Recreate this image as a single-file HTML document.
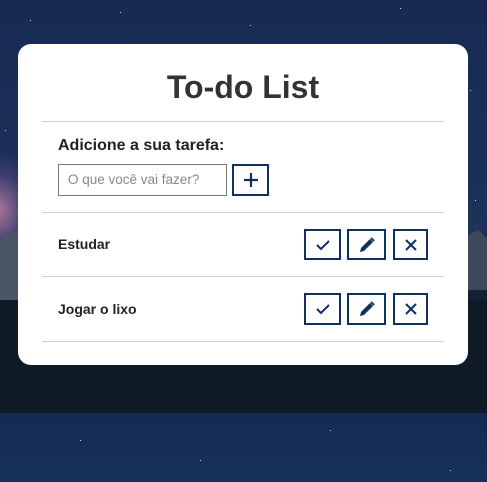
<!DOCTYPE html>
<html><head><style>
html,body{margin:0;padding:0;width:487px;height:482px;overflow:hidden;font-family:"Liberation Sans",sans-serif}
.bg{position:absolute;left:0;top:0;width:487px;height:482px;background:#13264a}
.sky{position:absolute;left:0;top:0;width:487px;height:413px;background:
radial-gradient(ellipse 40px 60px at 0 210px,rgba(200,130,170,.8),rgba(120,90,150,.35) 60%,transparent),
linear-gradient(#182a52 0,#1a2f58 40%,#1d3358 55%,#14243b 68%,#0d1a2a 80%,#0b1622 100%)}
.mtn{position:absolute;left:0;top:230px;width:487px;height:183px}
.low{position:absolute;left:0;top:413px;width:487px;height:69px;background:linear-gradient(#142a55,#16305c)}
.star{position:absolute;width:1px;height:1px;background:#cfd8ee}
.card{position:absolute;left:18px;top:44px;width:450px;height:321px;background:#fff;border-radius:13px}
h1{position:absolute;left:0;width:450px;top:67px;margin:0;text-align:center;font-size:32px;font-weight:bold;color:#333;line-height:40px}
.hr{position:absolute;left:42px;width:402px;height:1px;background:#d2d2d2}
.lab{position:absolute;left:58px;top:137px;font-size:16px;font-weight:bold;color:#222}
.inp{position:absolute;left:58px;top:164px;width:167px;height:30px;border:1px solid #777;font-size:13.5px;color:#888;line-height:30px}
.inp span{padding-left:9px}
.btn{position:absolute;box-sizing:border-box;border:2px solid #10305f;display:flex;align-items:center;justify-content:center}
.t{position:absolute;left:58px;font-size:14px;font-weight:bold;color:#222}
</style></head><body>
<div class="bg"></div><div class="sky"></div>
<svg class="mtn" width="487" height="183"><polygon points="0,10 10,3 18,0 18,80 0,80" fill="#4a5668"/><polygon points="468,5 478,0 487,8 487,60 468,60" fill="#3c4a5c"/><rect x="0" y="70" width="487" height="113" fill="#0e1a26"/></svg>
<div class="low"></div>
<div class="star" style="left:30px;top:20px"></div><div class="star" style="left:120px;top:12px"></div><div class="star" style="left:250px;top:25px"></div><div class="star" style="left:400px;top:8px"></div><div class="star" style="left:470px;top:90px"></div><div class="star" style="left:5px;top:130px"></div><div class="star" style="left:80px;top:440px"></div><div class="star" style="left:200px;top:460px"></div><div class="star" style="left:330px;top:430px"></div><div class="star" style="left:450px;top:470px"></div><div class="star" style="left:475px;top:200px"></div>
<div class="card"></div>
<h1 style="left:18px">To-do List</h1>
<div class="hr" style="top:121px"></div>
<div class="hr" style="top:212px"></div>
<div class="hr" style="top:276px"></div>
<div class="hr" style="top:341px"></div>
<div class="lab">Adicione a sua tarefa:</div>
<div class="inp"><span>O que você vai fazer?</span></div>
<div class="btn" style="left:232px;top:164px;width:37px;height:32px"><svg width="16" height="16"><path d="M8 1V15M1 8H15" stroke="#10305f" stroke-width="2.2"/></svg></div>
<div class="t" style="top:236px">Estudar</div>
<div class="t" style="top:301px">Jogar o lixo</div>
<div class="btn" style="left:304px;top:229px;width:37px;height:31px"><svg width="14" height="12"><path d="M1 6L5 10L13 2" stroke="#10305f" stroke-width="2" fill="none"/></svg></div>
<div class="btn" style="left:347px;top:229px;width:39px;height:31px"><svg width="16" height="16"><path d="M1 15L2 11L11 2L14 5L5 14Z" fill="#10305f"/><path d="M12 1L15 4" stroke="#10305f" stroke-width="2"/></svg></div>
<div class="btn" style="left:393px;top:229px;width:35px;height:31px"><svg width="12" height="12"><path d="M1 1L11 11M11 1L1 11" stroke="#10305f" stroke-width="2"/></svg></div>
<div class="btn" style="left:304px;top:293px;width:37px;height:32px"><svg width="14" height="12"><path d="M1 6L5 10L13 2" stroke="#10305f" stroke-width="2" fill="none"/></svg></div>
<div class="btn" style="left:347px;top:293px;width:39px;height:32px"><svg width="16" height="16"><path d="M1 15L2 11L11 2L14 5L5 14Z" fill="#10305f"/><path d="M12 1L15 4" stroke="#10305f" stroke-width="2"/></svg></div>
<div class="btn" style="left:393px;top:293px;width:35px;height:32px"><svg width="12" height="12"><path d="M1 1L11 11M11 1L1 11" stroke="#10305f" stroke-width="2"/></svg></div>
</body></html>
